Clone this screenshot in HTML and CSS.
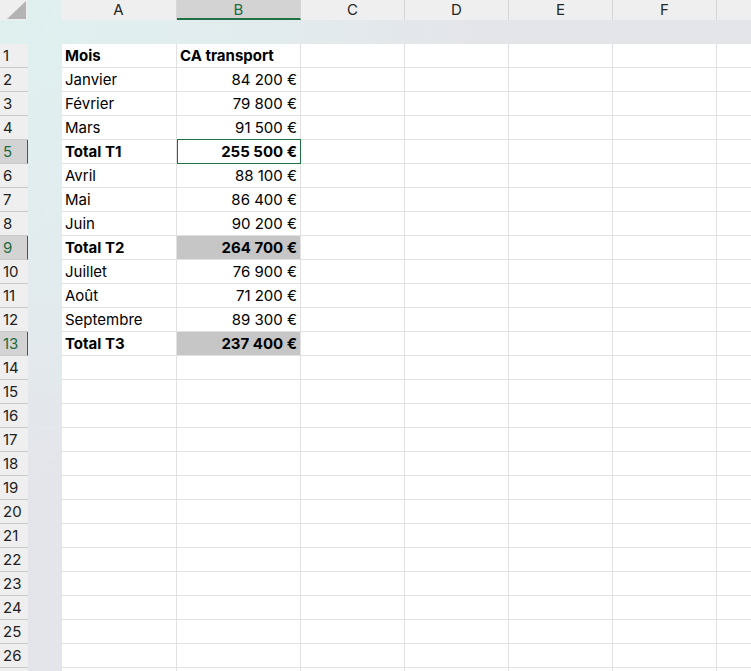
FILE: index.html
```html
<!DOCTYPE html>
<html lang="fr">
  <head>
    <meta charset="UTF-8" />
    <meta name="viewport" content="width=device-width, initial-scale=1.0" />
    <title>CA transport</title>
    <link rel="stylesheet" href="styles.css">
  </head>
  <body>
    <div class="sheet">
      <div class="colheads">
        <div class="corner"><span class="tri"></span></div>
        <div class="gap"></div>
        <div class="colhead ca">A</div>
        <div class="colhead cb sel">B</div>
        <div class="colhead">C</div>
        <div class="colhead">D</div>
        <div class="colhead">E</div>
        <div class="colhead">F</div>
        <div class="colhead rest"></div>
      </div>
      <div class="band"></div>

      <div class="row"><div class="rh">1</div><div class="gap"></div><div class="c ca b">Mois</div><div class="c cb b">CA transport</div><div class="c"></div><div class="c"></div><div class="c"></div><div class="c"></div><div class="c rest"></div></div>
      <div class="row"><div class="rh">2</div><div class="gap"></div><div class="c ca">Janvier</div><div class="c cb num">84 200 €</div><div class="c"></div><div class="c"></div><div class="c"></div><div class="c"></div><div class="c rest"></div></div>
      <div class="row"><div class="rh">3</div><div class="gap"></div><div class="c ca">Février</div><div class="c cb num">79 800 €</div><div class="c"></div><div class="c"></div><div class="c"></div><div class="c"></div><div class="c rest"></div></div>
      <div class="row"><div class="rh">4</div><div class="gap"></div><div class="c ca">Mars</div><div class="c cb num">91 500 €</div><div class="c"></div><div class="c"></div><div class="c"></div><div class="c"></div><div class="c rest"></div></div>
      <div class="row"><div class="rh sel">5</div><div class="gap"></div><div class="c ca b">Total T1</div><div class="c cb num b active">255 500 €</div><div class="c"></div><div class="c"></div><div class="c"></div><div class="c"></div><div class="c rest"></div></div>
      <div class="row"><div class="rh">6</div><div class="gap"></div><div class="c ca">Avril</div><div class="c cb num">88 100 €</div><div class="c"></div><div class="c"></div><div class="c"></div><div class="c"></div><div class="c rest"></div></div>
      <div class="row"><div class="rh">7</div><div class="gap"></div><div class="c ca">Mai</div><div class="c cb num">86 400 €</div><div class="c"></div><div class="c"></div><div class="c"></div><div class="c"></div><div class="c rest"></div></div>
      <div class="row"><div class="rh">8</div><div class="gap"></div><div class="c ca">Juin</div><div class="c cb num">90 200 €</div><div class="c"></div><div class="c"></div><div class="c"></div><div class="c"></div><div class="c rest"></div></div>
      <div class="row"><div class="rh sel">9</div><div class="gap"></div><div class="c ca b">Total T2</div><div class="c cb num b picked">264 700 €</div><div class="c"></div><div class="c"></div><div class="c"></div><div class="c"></div><div class="c rest"></div></div>
      <div class="row"><div class="rh">10</div><div class="gap"></div><div class="c ca">Juillet</div><div class="c cb num">76 900 €</div><div class="c"></div><div class="c"></div><div class="c"></div><div class="c"></div><div class="c rest"></div></div>
      <div class="row"><div class="rh">11</div><div class="gap"></div><div class="c ca">Août</div><div class="c cb num">71 200 €</div><div class="c"></div><div class="c"></div><div class="c"></div><div class="c"></div><div class="c rest"></div></div>
      <div class="row"><div class="rh">12</div><div class="gap"></div><div class="c ca">Septembre</div><div class="c cb num">89 300 €</div><div class="c"></div><div class="c"></div><div class="c"></div><div class="c"></div><div class="c rest"></div></div>
      <div class="row"><div class="rh sel">13</div><div class="gap"></div><div class="c ca b">Total T3</div><div class="c cb num b picked">237 400 €</div><div class="c"></div><div class="c"></div><div class="c"></div><div class="c"></div><div class="c rest"></div></div>
      <div class="row"><div class="rh">14</div><div class="gap"></div><div class="c ca"></div><div class="c cb"></div><div class="c"></div><div class="c"></div><div class="c"></div><div class="c"></div><div class="c rest"></div></div>
      <div class="row"><div class="rh">15</div><div class="gap"></div><div class="c ca"></div><div class="c cb"></div><div class="c"></div><div class="c"></div><div class="c"></div><div class="c"></div><div class="c rest"></div></div>
      <div class="row"><div class="rh">16</div><div class="gap"></div><div class="c ca"></div><div class="c cb"></div><div class="c"></div><div class="c"></div><div class="c"></div><div class="c"></div><div class="c rest"></div></div>
      <div class="row"><div class="rh">17</div><div class="gap"></div><div class="c ca"></div><div class="c cb"></div><div class="c"></div><div class="c"></div><div class="c"></div><div class="c"></div><div class="c rest"></div></div>
      <div class="row"><div class="rh">18</div><div class="gap"></div><div class="c ca"></div><div class="c cb"></div><div class="c"></div><div class="c"></div><div class="c"></div><div class="c"></div><div class="c rest"></div></div>
      <div class="row"><div class="rh">19</div><div class="gap"></div><div class="c ca"></div><div class="c cb"></div><div class="c"></div><div class="c"></div><div class="c"></div><div class="c"></div><div class="c rest"></div></div>
      <div class="row"><div class="rh">20</div><div class="gap"></div><div class="c ca"></div><div class="c cb"></div><div class="c"></div><div class="c"></div><div class="c"></div><div class="c"></div><div class="c rest"></div></div>
      <div class="row"><div class="rh">21</div><div class="gap"></div><div class="c ca"></div><div class="c cb"></div><div class="c"></div><div class="c"></div><div class="c"></div><div class="c"></div><div class="c rest"></div></div>
      <div class="row"><div class="rh">22</div><div class="gap"></div><div class="c ca"></div><div class="c cb"></div><div class="c"></div><div class="c"></div><div class="c"></div><div class="c"></div><div class="c rest"></div></div>
      <div class="row"><div class="rh">23</div><div class="gap"></div><div class="c ca"></div><div class="c cb"></div><div class="c"></div><div class="c"></div><div class="c"></div><div class="c"></div><div class="c rest"></div></div>
      <div class="row"><div class="rh">24</div><div class="gap"></div><div class="c ca"></div><div class="c cb"></div><div class="c"></div><div class="c"></div><div class="c"></div><div class="c"></div><div class="c rest"></div></div>
      <div class="row"><div class="rh">25</div><div class="gap"></div><div class="c ca"></div><div class="c cb"></div><div class="c"></div><div class="c"></div><div class="c"></div><div class="c"></div><div class="c rest"></div></div>
      <div class="row"><div class="rh">26</div><div class="gap"></div><div class="c ca"></div><div class="c cb"></div><div class="c"></div><div class="c"></div><div class="c"></div><div class="c"></div><div class="c rest"></div></div>
      <div class="row"><div class="rh"></div><div class="gap"></div><div class="c ca"></div><div class="c cb"></div><div class="c"></div><div class="c"></div><div class="c"></div><div class="c"></div><div class="c rest"></div></div>
    </div>
  </body>
</html>
```

FILE: styles.css
```css
*{
    margin: 0px;
    padding: 0px;
    box-sizing: border-box;
}
body{
    font-family: "Inter", "Liberation Sans", sans-serif;
    font-size: 15px;
    color: #000;
    height: 671px;
    overflow: hidden;
    background: radial-gradient(circle at 0 0, #dff0ef 0px, #e2ecee 260px, #e4e5ea 480px);
}
.sheet{
    display: flex;
    flex-direction: column;
}
.colheads{
    display: flex;
    height: 20px;
}
.corner{
    width: 27px;
    background-color: #efefef;
    position: relative;
}
.tri{
    position: absolute;
    right: 1px;
    bottom: 1px;
    width: 19px;
    height: 18px;
    background-color: #b3b3b3;
    clip-path: polygon(100% 0, 100% 100%, 0 100%);
}
.colheads .gap{
    width: 34px;
}
.colhead{
    width: 104px;
    background-color: #efefef;
    border-right: 1px solid #d6d6d6;
    text-align: center;
    line-height: 20px;
    color: #262626;
}
.colhead.ca{
    width: 116px;
}
.colhead.cb{
    width: 124px;
}
.colhead.sel{
    background-color: #d3d3d3;
    color: #1d6b41;
    border-bottom: 2px solid #1e7145;
    line-height: 19px;
}
.colhead.rest{
    flex: 1;
    border-right: none;
}
.band{
    height: 24px;
}
.row{
    display: flex;
    height: 24px;
}
.rh{
    width: 28px;
    background-color: #efefef;
    border-bottom: 1px solid #c9c9c9;
    padding-left: 3px;
    line-height: 23px;
    color: #222;
}
.rh.sel{
    background-color: #d3d3d3;
    color: #1d6b41;
    border-right: 1px solid #1e7145;
}
.row .gap{
    width: 34px;
}
.c{
    width: 104px;
    background-color: #fff;
    border-right: 1px solid #e1e1e1;
    border-bottom: 1px solid #e1e1e1;
    padding: 0 3px;
    line-height: 23px;
    white-space: nowrap;
}
.c.ca{
    width: 115px;
}
.c.cb{
    width: 124px;
}
.c.rest{
    flex: 1;
    border-right: none;
}
.b{
    font-weight: 700;
}
.num{
    text-align: right;
}
.picked{
    background-color: #c6c6c6;
}
.active{
    border: 1px solid #1e7145;
    margin-top: -1px;
    height: 25px;
    line-height: 23px;
}
```
